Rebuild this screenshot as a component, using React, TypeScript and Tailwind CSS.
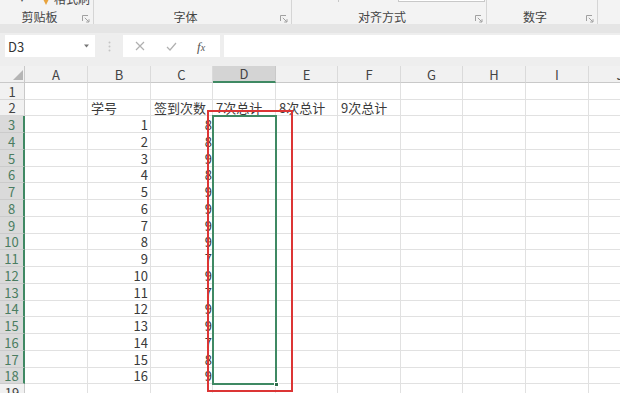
import React from "react";

const COLS =
  "grid grid-cols-[25px_63px_63px_62px_63px_62px_63px_62px_63px_63px_63px]";
const letters = ["A", "B", "C", "D", "E", "F", "G", "H", "I", "J"];
const rowHeights = [17, 16, 17, 17, 17, 16, 17, 17, 17, 16, 17, 17, 17, 16, 17, 17, 17, 16, 17];
const cVals = [8, 8, 9, 8, 9, 9, 9, 9, 7, 9, 7, 9, 9, 7, 8, 9];

function Launcher() {
  return (
    <svg width="8" height="8" viewBox="0 0 8 8">
      <path d="M0.5 6V0.5H6" stroke="#a0a0a0" fill="none" strokeWidth="1" />
      <path d="M2.8 2.8L6.8 6.8M7 4.2V7H4.2" stroke="#a0a0a0" fill="none" strokeWidth="1" />
    </svg>
  );
}

function Group({
  label,
  width,
  children,
}: {
  label: string;
  width: string;
  children?: React.ReactNode;
}) {
  return (
    <div className={`${width} h-full flex flex-col border-r border-[#d5d5d5]`}>
      <div className="h-[10px] overflow-hidden flex items-start">{children}</div>
      <div className="h-[14px] flex items-center">
        <span className="flex-1 text-center text-[12px] leading-none text-[#444]">{label}</span>
        <span className="w-[14px] flex items-center justify-center pt-[3px]">
          <Launcher />
        </span>
      </div>
    </div>
  );
}

function cellContent(r: number, c: number): { text: string; cls: string } | null {
  const left = "flex items-center pl-[3px]";
  if (r === 2) {
    const m: Record<number, string> = { 1: "学号", 2: "签到次数", 3: "7次总计", 4: "8次总计", 5: "9次总计" };
    if (m[c]) return { text: m[c], cls: left };
    return null;
  }
  if (r >= 3 && r <= 18) {
    if (c === 1) return { text: String(r - 2), cls: "flex items-center justify-end pr-[2px]" };
    if (c === 2) return { text: String(cVals[r - 3]), cls: "flex items-center justify-end pr-0" };
  }
  return null;
}

export default function App() {
  return (
    <div className="w-[620px] h-[393px] overflow-hidden bg-white flex flex-col [font-family:'Noto_Sans_CJK_SC',sans-serif] text-[#333]">
      {/* Ribbon */}
      <div className="h-[24px] bg-[#f3f3f3] flex shrink-0">
        <Group label="剪贴板" width="w-[94px]">
          <div className="h-[7px] overflow-hidden w-full flex items-end">
            <div className="h-[16px] shrink-0 flex items-center w-full">
              <span className="ml-[20px] text-[8px] text-[#555] leading-none">▾</span>
              <svg className="ml-[17px]" width="10" height="16" viewBox="0 0 10 16">
                <path d="M2 2h6v6l-3 6-3-6z" fill="#e8a33d" />
              </svg>
              <span className="ml-[3px] text-[12px] leading-[16px] text-[#444]">格式刷</span>
            </div>
          </div>
        </Group>
        <Group label="字体" width="w-[198px]" />
        <Group label="对齐方式" width="w-[195px]">
          <div className="h-[3px] w-full flex items-start">
            <div className="ml-[46px] w-px h-[2px] bg-[#c8c8c8]" />
            <div className="ml-[59px] w-[87px] h-[2px] border-b border-l border-r border-[#c8c8c8] bg-white" />
          </div>
        </Group>
        <Group label="数字" width="w-[111px]" />
        <div className="flex-1" />
      </div>
      {/* band */}
      <div className="h-[9px] bg-[#e5e5e5] shrink-0" />
      {/* formula area */}
      <div className="h-[33px] bg-[#eeeeee] shrink-0 flex items-start pt-[2px]">
        <div className="ml-[5px] w-[90px] h-[22px] bg-white flex items-center">
          <span className="ml-[3px] text-[13px] leading-none text-[#333]">D3</span>
          <span className="flex-1" />
          <svg className="mr-[6px]" width="5" height="4" viewBox="0 0 5 4">
            <path d="M0 0.5h5L2.5 3.5z" fill="#777" />
          </svg>
        </div>
        <div className="w-[28px] h-[22px] flex items-center justify-center">
          <svg width="3" height="11" viewBox="0 0 3 11">
            <circle cx="1.5" cy="1.5" r="1" fill="#c4c4c4" />
            <circle cx="1.5" cy="5.5" r="1" fill="#c4c4c4" />
            <circle cx="1.5" cy="9.5" r="1" fill="#c4c4c4" />
          </svg>
        </div>
        <div className="w-[97px] h-[22px] bg-white flex items-center">
          <svg className="ml-[12px]" width="10" height="10" viewBox="0 0 10 10">
            <path d="M1 1L9 9M9 1L1 9" stroke="#b0b0b0" strokeWidth="1.2" />
          </svg>
          <svg className="ml-[21px]" width="11" height="9" viewBox="0 0 11 9">
            <path d="M1 5L4 8L10 1" stroke="#b0b0b0" strokeWidth="1.2" fill="none" />
          </svg>
          <span className="ml-[20px] text-[13px] italic leading-none text-[#555] [font-family:'Liberation_Serif',serif]">
            f<span className="text-[10px]">x</span>
          </span>
        </div>
        <div className="ml-[4px] flex-1 h-[22px] bg-white" />
      </div>
      {/* Grid */}
      <div className="relative flex-1">
        {/* header row */}
        <div className={`${COLS} h-[17px]`}>
          <div className="bg-[#f1f1f1] border-r border-b border-[#c9c9c9] flex items-end justify-end pr-[1px] pb-[2px]">
            <svg width="10" height="10" viewBox="0 0 10 10">
              <path d="M10 0V10H0z" fill="#b5b5b5" />
            </svg>
          </div>
          {letters.map((l) => (
            <div
              key={l}
              className={
                l === "D"
                  ? "bg-[#d4d4d4] border-r border-r-[#c9c9c9] border-b-2 border-b-[#3f8963] flex items-center justify-center text-[13px] leading-none text-[#444]"
                  : "bg-[#f1f1f1] border-r border-r-[#dadada] border-b border-b-[#c9c9c9] flex items-center justify-center text-[13px] leading-none text-[#444]"
              }
            >
              {l}
            </div>
          ))}
        </div>
        {rowHeights.map((h, i) => {
          const r = i + 1;
          const sel = r >= 3 && r <= 18;
          return (
            <div key={r} className={`${COLS} ${h === 17 ? "h-[17px]" : "h-[16px]"}`}>
              <div
                className={
                  sel
                    ? "bg-[#dadada] text-[#4a7d61] border-r-2 border-r-[#3f8963] border-b border-b-[#cbcbcb] flex items-center justify-center text-[13px] leading-none"
                    : "bg-[#f1f1f1] text-[#444] border-r border-r-[#c9c9c9] border-b border-b-[#d8d8d8] flex items-center justify-center text-[13px] leading-none"
                }
              >
                {r}
              </div>
              {letters.map((l, c) => {
                const cc = cellContent(r, c);
                return (
                  <div
                    key={l}
                    className={`border-r border-b border-[#e1e1e1] text-[13px] leading-none whitespace-nowrap text-[#3a3a3a] ${cc ? cc.cls : ""}`}
                  >
                    {cc ? cc.text : null}
                  </div>
                );
              })}
            </div>
          );
        })}
        {/* selection overlay */}
        <div className="absolute left-[212px] top-[49px] w-[65px] h-[270px] border-2 border-[#3f8963]" />
        <div className="absolute left-[274px] top-[316px] w-[5px] h-[5px] bg-[#2f6e4c] border border-white" />
        {/* red annotation */}
        <div className="absolute left-[207px] top-[44px] w-[86px] h-[282px] border-2 border-[#dc3535]" />
      </div>
    </div>
  );
}
